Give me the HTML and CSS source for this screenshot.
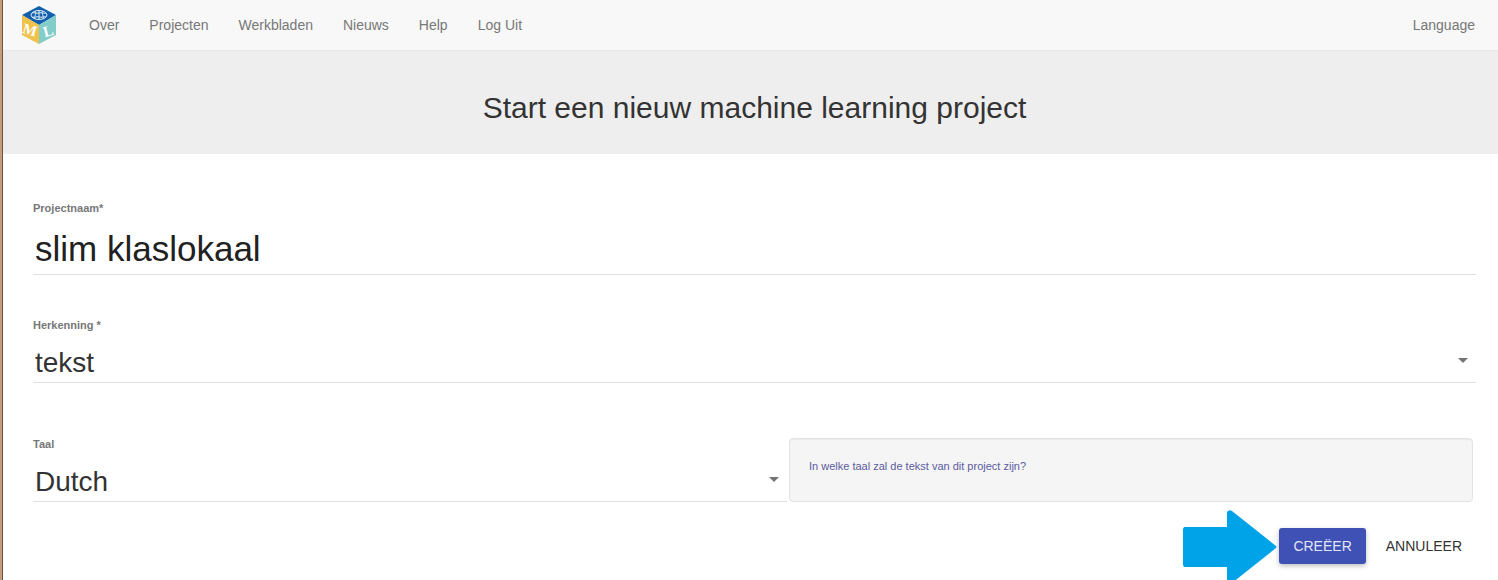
FILE: index.html
```html
<!DOCTYPE html>
<html lang="nl">
<head>
<meta charset="utf-8">
<title>Start een nieuw machine learning project</title>
<link rel="stylesheet" href="styles.css">
</head>
<body>
<nav class="navbar">
  <a class="brand" href="#" aria-label="Home">
    <svg width="36" height="40" viewBox="0 0 36 40" aria-hidden="true">
      <path fill="#1260ab" d="M18 1 35 10 18 20 1 10z"/>
      <path fill="#f0c24b" d="M1 10 18 20V39L1 30z"/>
      <path fill="#82cdca" d="M35 10 18 20V39l17-9z"/>
      <g fill="none" stroke="#dcebf7" stroke-width="1">
        <ellipse cx="18" cy="10" rx="8" ry="4.5"/>
        <path d="M18 5.500v9M11 8c3-1 4 1 7 0s4 1 7 0M11 12c3 1 4-1 7 0s4-1 7 0M14 6c2 2-1 5 0 8M22 6c-2 2 1 5 0 8"/>
      </g>
      <text class="cube-letter" x="9" y="30" transform="rotate(16 9 25)">M</text>
      <text class="cube-letter" x="27" y="31" transform="rotate(-16 27 25)">L</text>
    </svg>
  </a>
  <div class="links">
    <a href="#">Over</a>
    <a href="#">Projecten</a>
    <a href="#">Werkbladen</a>
    <a href="#">Nieuws</a>
    <a href="#">Help</a>
    <a href="#">Log Uit</a>
  </div>
  <a class="language" href="#">Language</a>
</nav>
<header class="banner"><h1>Start een nieuw machine learning project</h1></header>
<main>
  <form class="form">
    <div class="field field-name">
      <label for="name">Projectnaam*</label>
      <input id="name" type="text" value="slim klaslokaal">
    </div>
    <div class="field">
      <label for="type">Herkenning *</label>
      <div class="picker">
        <select id="type"><option>tekst</option></select>
        <svg class="caret" width="10" height="5" viewBox="0 0 10 5" aria-hidden="true"><path d="M0 0h10L5 5z"/></svg>
      </div>
    </div>
    <div class="language-row">
      <div class="field">
        <label for="lang">Taal</label>
        <div class="picker">
          <select id="lang"><option>Dutch</option></select>
          <svg class="caret" width="10" height="5" viewBox="0 0 10 5" aria-hidden="true"><path d="M0 0h10L5 5z"/></svg>
        </div>
      </div>
      <div class="well">In welke taal zal de tekst van dit project zijn?</div>
    </div>
    <div class="actions">
      <div class="create">
        <svg class="pointer" width="95" height="76" viewBox="0 0 95 76" aria-hidden="true"><path d="M2 18H45V3q2-3 5-1L94 37q1 1 0 2L50 74q-3 2-5-1V58H2l-1-2V20z"/></svg>
        <button class="primary" type="submit">CREËER</button>
      </div>
      <button type="button">ANNULEER</button>
    </div>
  </form>
</main>
</body>
</html>
```
FILE: styles.css
```css
* { box-sizing: border-box; }

html {
  border-left: 2px solid #c69c7d;
  background: #fff;
}

body {
  display: flex;
  flex-direction: column;
  min-height: 100vh;
  margin: 0;
  border-left: 1px solid #705040;
  background: #fff;
  color: #333;
  font-family: "Liberation Sans", Arial, sans-serif;
  font-size: 14px;
}

.navbar {
  display: flex;
  align-items: center;
  height: 51px;
  padding: 0 23px 0 18px;
  border-bottom: 1px solid #e7e7e7;
  background: #f8f8f8;
}

.navbar a {
  color: #777;
  text-decoration: none;
}

.brand { display: flex; }
.links {
  display: flex;
  gap: 30px;
  margin-left: 32px;
}
.language { margin-left: auto; }

.cube-letter {
  fill: #fff;
  font: bold 15px "Liberation Serif", serif;
  text-anchor: middle;
}

.banner {
  padding: 40px 16px 30px 24px;
  background: #eee;
  text-align: center;
}

h1 {
  margin: 0;
  font-size: 30px;
  font-weight: 400;
  line-height: 33px;
}

main {
  flex: 1;
  overflow: hidden;
  padding: 46px 22px 16px 30px;
}

.field label {
  display: block;
  margin-bottom: 9px;
  color: #777;
  font-size: 11px;
  font-weight: 700;
  line-height: 16px;
}

.field input,
.field select {
  display: block;
  width: 100%;
  height: 41px;
  margin: 0;
  padding: 0 2px;
  border: 0;
  border-bottom: 1px solid #e0e0e0;
  border-radius: 0;
  outline: 0;
  appearance: none;
  background: transparent;
  color: #333;
  font-family: inherit;
  font-size: 28px;
}

.field input {
  height: 50px;
  padding-bottom: 2px;
  color: #212121;
  font-size: 35px;
}

.field-name { margin-bottom: 42px; }

.picker { position: relative; }
.caret {
  position: absolute;
  top: 16px;
  right: 8px;
  fill: #757575;
  pointer-events: none;
}

.language-row {
  display: grid;
  grid-template-columns: 754fr 684fr;
  gap: 2px;
  align-items: end;
  margin-top: 53px;
  padding-right: 3px;
}

.well {
  height: 64px;
  padding: 19px;
  border: 1px solid #e3e3e3;
  border-radius: 4px;
  background: #f5f5f5;
  box-shadow: inset 0 1px 1px rgba(0, 0, 0, .05);
  color: #5c5ca0;
  font-size: 11px;
  line-height: 16px;
}

.actions {
  display: flex;
  justify-content: flex-end;
  gap: 6px;
  margin-top: 26px;
}

.create { position: relative; }
.pointer {
  position: absolute;
  top: -19px;
  right: 100%;
  margin-right: 2px;
  fill: #00a2e8;
}

.actions button {
  height: 36px;
  padding: 0 14px;
  border: 0;
  border-radius: 3px;
  background: transparent;
  color: #333;
  font-family: inherit;
  font-size: 14px;
}

.actions .primary {
  background: #3f51b5;
  box-shadow: 0 2px 5px rgba(0, 0, 0, .26);
  color: #e3e6f5;
}
```
